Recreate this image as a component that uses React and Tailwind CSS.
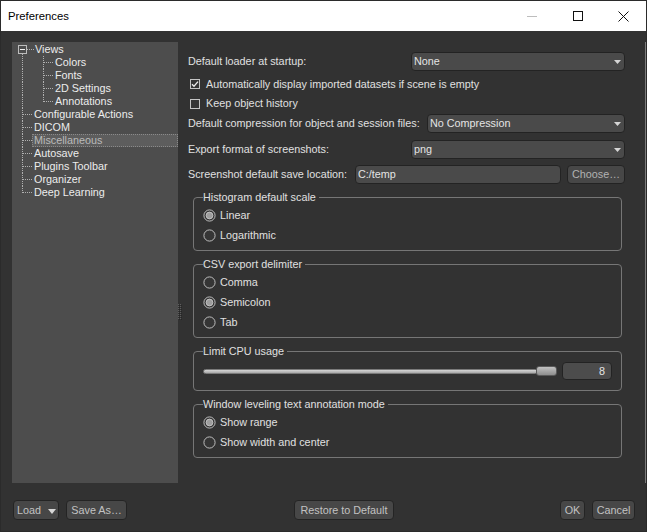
import React from 'react';

const dot = { stroke: '#b0b0b0', strokeWidth: 1, strokeDasharray: '1 1', fill: 'none' };

const tree = [
  { t: 'Views', kind: 'root' },
  { t: 'Colors', kind: 'child' },
  { t: 'Fonts', kind: 'child' },
  { t: '2D Settings', kind: 'child' },
  { t: 'Annotations', kind: 'child', lastChild: true },
  { t: 'Configurable Actions', kind: 'top' },
  { t: 'DICOM', kind: 'top' },
  { t: 'Miscellaneous', kind: 'top', sel: true },
  { t: 'Autosave', kind: 'top' },
  { t: 'Plugins Toolbar', kind: 'top' },
  { t: 'Organizer', kind: 'top' },
  { t: 'Deep Learning', kind: 'top', last: true },
];

function TreeRow({ item }) {
  if (item.kind === 'root') {
    return (
      <div className="flex h-[13px]">
        <svg width="23" height="13" className="shrink-0">
          <rect x="6.5" y="2.5" width="8" height="8" fill="#4d4d4d" stroke="#bdbdbd" />
          <rect x="8" y="6" width="5" height="1" fill="#f0f0f0" />
          <line x1="15" y1="6.5" x2="22" y2="6.5" {...dot} />
          <line x1="10.5" y1="11" x2="10.5" y2="13" {...dot} />
        </svg>
        <span className="leading-[13px] text-[#ececec]">{item.t}</span>
      </div>
    );
  }
  if (item.kind === 'child') {
    return (
      <div className="flex h-[13px]">
        <svg width="41" height="13" className="shrink-0">
          <line x1="10.5" y1="0" x2="10.5" y2="13" {...dot} />
          <line x1="31.5" y1="0" x2="31.5" y2={item.lastChild ? 7 : 13} {...dot} />
          <line x1="32" y1="6.5" x2="41" y2="6.5" {...dot} />
        </svg>
        <span className="pl-[2px] leading-[13px] text-[#ececec]">{item.t}</span>
      </div>
    );
  }
  return (
    <div className="flex h-[13px]">
      <svg width="20" height="13" className="shrink-0">
        <line x1="10.5" y1="0" x2="10.5" y2={item.last ? 7 : 13} {...dot} />
        <line x1="11" y1="6.5" x2="20" y2="6.5" {...dot} />
      </svg>
      {item.sel ? (
        <div className="flex-1 bg-[#5d5d5d] pl-[2px] leading-[13px] text-[#bababa] outline-dotted outline-1 -outline-offset-1 outline-[#8a8a8a]">
          {item.t}
        </div>
      ) : (
        <div className="flex-1 pl-[2px] leading-[13px] text-[#ececec]">{item.t}</div>
      )}
    </div>
  );
}

function Arrow() {
  return (
    <svg width="7" height="4" className="shrink-0">
      <path d="M0 0H7L3.5 4Z" fill="#d6d6d6" />
    </svg>
  );
}

function Combo({ value }) {
  return (
    <div className="flex h-[19px] flex-1 items-center rounded-[4px] border border-[#232323] bg-[#4a4a4a] pl-[2px] pr-[3px]">
      <span className="flex-1 text-[#e4e4e4]">{value}</span>
      <Arrow />
    </div>
  );
}

function Check({ checked }) {
  return (
    <svg width="10" height="10" className="shrink-0">
      <rect x="0.5" y="0.5" width="9" height="9" fill="#353535" stroke="#c4c4c4" />
      {checked && <path d="M2 5.2L4 7.2L8 2.6" stroke="#ececec" strokeWidth="1.3" fill="none" />}
    </svg>
  );
}

function Radio({ checked }) {
  return (
    <svg width="13" height="13" className="shrink-0">
      <circle cx="6.5" cy="6.5" r="5.6" fill="#353535" stroke="#bdbdbd" />
      {checked && <circle cx="6.5" cy="6.5" r="3.4" fill="#9e9e9e" stroke="#cfcfcf" strokeWidth="0.8" />}
    </svg>
  );
}

function RadioRow({ label, checked }) {
  return (
    <div className="flex h-[20px] items-center gap-[4px]">
      <Radio checked={checked} />
      <span className="text-[#e0e0e0]">{label}</span>
    </div>
  );
}

function Button({ children, className }) {
  return (
    <div
      className={`flex h-[20px] items-center rounded-[4px] border border-[#242424] bg-[#474747] text-[#c2c2c2] ${className}`}
    >
      {children}
    </div>
  );
}

export default function App() {
  return (
    <div className="flex h-[532px] w-[647px] flex-col whitespace-nowrap border border-[#2b2b2b] bg-[#323232] font-['Liberation_Sans',Arial,sans-serif] text-[10.8px]">
      {/* title bar */}
      <div className="flex h-[30px] shrink-0 items-center bg-white">
        <span className="flex-1 pl-[7px] text-[11.3px] text-black">Preferences</span>
        <div className="flex h-full w-[46px] items-center justify-center">
          <svg width="10" height="10">
            <line x1="0" y1="5.5" x2="10" y2="5.5" stroke="#bdbdbd" />
          </svg>
        </div>
        <div className="flex h-full w-[46px] items-center justify-center">
          <svg width="10" height="10">
            <rect x="0.5" y="0.5" width="9" height="9" fill="none" stroke="#111" />
          </svg>
        </div>
        <div className="flex h-full w-[45px] items-center justify-center">
          <svg width="11" height="11">
            <path d="M0.5 0.5L10.5 10.5M10.5 0.5L0.5 10.5" stroke="#111" strokeWidth="1" />
          </svg>
        </div>
      </div>

      {/* body */}
      <div className="flex flex-1 flex-col">
        <div className="flex flex-1 pl-[11px] pt-[11px]">
          {/* tree */}
          <div className="w-[166px] shrink-0 bg-[#4d4d4d] pt-[1px]">
            {tree.map((it) => (
              <TreeRow key={it.t} item={it} />
            ))}
          </div>
          {/* splitter */}
          <div className="w-[5px] shrink-0 pt-[262px]">
            <svg width="4" height="16">
              {[0, 2, 4, 6, 8, 10, 12, 14].map((y) => (
                <g key={y}>
                  <rect x="0" y={y} width="1" height="1" fill="#5e5e5e" />
                  <rect x="2" y={y} width="1" height="1" fill="#5e5e5e" />
                  <rect x="1" y={y + 1} width="1" height="1" fill="#262626" />
                  <rect x="3" y={y + 1} width="1" height="1" fill="#262626" />
                </g>
              ))}
            </svg>
          </div>
          {/* right panel */}
          <div className="flex flex-1 flex-col border-r border-[#7c7c7c] pl-[5px] pr-[20px] pt-[10px] text-[#e0e0e0]">
            <div className="flex h-[19px] items-center">
              <span className="w-[223px] shrink-0">Default loader at startup:</span>
              <Combo value="None" />
            </div>
            <div className="mt-[3px] flex h-[20px] items-center gap-[6px] pl-[2px]">
              <Check checked />
              <span>Automatically display imported datasets if scene is empty</span>
            </div>
            <div className="flex h-[19px] items-center gap-[6px] pl-[2px]">
              <Check />
              <span>Keep object history</span>
            </div>
            <div className="mt-[1px] flex h-[19px] items-center">
              <span className="w-[239px] shrink-0">Default compression for object and session files:</span>
              <Combo value="No Compression" />
            </div>
            <div className="mt-[7px] flex h-[19px] items-center">
              <span className="w-[223px] shrink-0">Export format of screenshots:</span>
              <Combo value="png" />
            </div>
            <div className="mt-[6px] flex h-[19px] items-center">
              <span className="w-[167px] shrink-0">Screenshot default save location:</span>
              <div className="flex h-[19px] w-[206px] items-center rounded-[4px] border border-[#232323] bg-[#4a4a4a] pl-[2px] text-[#e4e4e4]">
                C:/temp
              </div>
              <div className="ml-[6px] flex h-[19px] w-[58px] items-center justify-center rounded-[4px] border border-[#232323] bg-[#474747] text-[#b2b2b2]">
                Choose…
              </div>
            </div>

            <fieldset className="ml-[5px] mr-[3px] mt-[6px] rounded-[4px] border border-[#767676] pb-[5px] pl-[9px] pr-[9px] pt-[1px]">
              <legend className="pr-[3px] leading-[14px]">Histogram default scale</legend>
              <RadioRow label="Linear" checked />
              <RadioRow label="Logarithmic" />
            </fieldset>

            <fieldset className="ml-[5px] mr-[3px] mt-[6px] rounded-[4px] border border-[#767676] pb-[5px] pl-[9px] pr-[9px] pt-[1px]">
              <legend className="pr-[3px] leading-[14px]">CSV export delimiter</legend>
              <RadioRow label="Comma" />
              <RadioRow label="Semicolon" checked />
              <RadioRow label="Tab" />
            </fieldset>

            <fieldset className="ml-[5px] mr-[3px] mt-[6px] rounded-[4px] border border-[#767676] pb-[10px] pl-[9px] pr-[9px] pt-[4px]">
              <legend className="pr-[3px] leading-[14px]">Limit CPU usage</legend>
              <div className="flex h-[18px] items-center gap-[5px]">
                <div className="flex flex-1 items-center">
                  <div className="h-[5px] flex-1 rounded-full border border-[#7a7a7a] bg-gradient-to-b from-[#d6d6d6] to-[#a8a8a8]" />
                  <div className="-ml-[2px] h-[10px] w-[21px] rounded-[3px] border border-[#5a5a5a] bg-gradient-to-b from-[#c2c2c2] to-[#8e8e8e]" />
                </div>
                <div className="flex h-[18px] w-[50px] items-center justify-end rounded-[4px] border border-[#232323] bg-[#4c4c4c] pr-[6px] text-[#e4e4e4]">
                  8
                </div>
              </div>
            </fieldset>

            <fieldset className="ml-[5px] mr-[3px] mt-[6px] rounded-[4px] border border-[#767676] pb-[5px] pl-[9px] pr-[9px] pt-[1px]">
              <legend className="pr-[3px] leading-[14px]">Window leveling text annotation mode</legend>
              <RadioRow label="Show range" checked />
              <RadioRow label="Show width and center" />
            </fieldset>
          </div>
        </div>

        {/* bottom buttons */}
        <div className="mb-[11px] mt-[17px] flex h-[20px] items-center pl-[12px] pr-[11px]">
          <Button className="w-[46px] justify-between pl-[3px] pr-[2px]">
            <span>Load</span>
            <svg width="8" height="5" className="mt-[3px]">
              <path d="M0 0H8L4 5Z" fill="#d6d6d6" />
            </svg>
          </Button>
          <Button className="ml-[7px] w-[61px] justify-center">Save As…</Button>
          <Button className="ml-[167px] w-[100px] justify-center">Restore to Default</Button>
          <div className="flex-1" />
          <Button className="w-[25px] justify-center">OK</Button>
          <Button className="ml-[7px] w-[43px] justify-center">Cancel</Button>
        </div>
      </div>
    </div>
  );
}
